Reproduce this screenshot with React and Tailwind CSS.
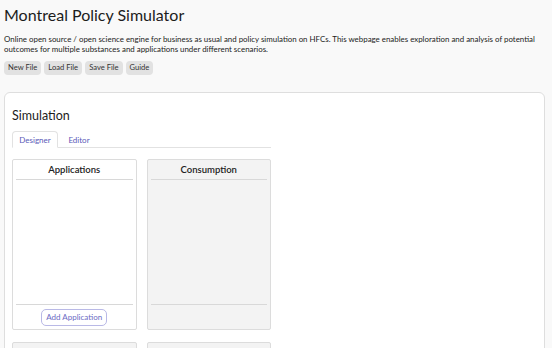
import React, { useState } from 'react';

const font = { fontFamily: 'Lato, "Liberation Sans", sans-serif' };

const ListPanel = ({ title, muted, action }) => (
    <div className={`h-[171px] flex flex-col border border-[#dcdcdc] rounded-[2px] px-[3px] ${muted ? 'bg-[#f3f3f3]' : 'bg-white'}`}>
        <div className="h-[20px] shrink-0 flex items-center justify-center border-b border-[#d8d8d8] text-[9.5px] font-semibold text-[#222]">
            {title}
        </div>
        <div className="flex-1 border-b border-[#d8d8d8]" />
        <div className="h-[24px] shrink-0 flex items-center justify-center">
            {action && (
                <button className="h-[17px] px-[4px] rounded-[5px] border border-[#b9b9e6] bg-white text-[8px] text-[#6b6bc4]">
                    {action}
                </button>
            )}
        </div>
    </div>
);

const App = () => {
    const [tab, setTab] = useState('designer');

    return (
        <div className="min-h-screen bg-[#f9f9f9] text-[#1c1c1c] px-[4px] pt-[5px]" style={font}>
            <h1 className="text-[16px] leading-[20px] font-normal">Montreal Policy Simulator</h1>
            <p className="mt-[10px] text-[7.9px] leading-[9.7px] text-[#222]">
                Online open source / open science engine for business as usual and policy simulation on HFCs. This webpage enables exploration and analysis of potential outcomes for multiple substances and applications under different scenarios.
            </p>
            <div className="mt-[6.5px] flex gap-[3px]">
                {['New File', 'Load File', 'Save File', 'Guide'].map(label => (
                    <button
                        key={label}
                        className="h-[14px] px-[4px] rounded-[4px] bg-[#e2e2e2] text-[7.6px] text-[#333] leading-none"
                    >
                        {label}
                    </button>
                ))}
            </div>

            <section className="mt-[17px] mr-[3px] bg-white border border-[#dedede] rounded-[6px] px-[7px] pt-[15px] pb-[20px]">
                <h2 className="text-[12.5px] leading-[16px]">Simulation</h2>
                <div className="w-[259px] mt-[7.5px] flex items-end border-b border-[#e2e2e2] text-[8px] text-[#5a5ab8]">
                    <button
                        onClick={() => setTab('designer')}
                        className={`h-[17px] w-[46px] rounded-t-[4px] -mb-px ${tab === 'designer' ? 'border border-b-white border-[#e2e2e2] bg-white' : ''}`}
                    >
                        Designer
                    </button>
                    <button
                        onClick={() => setTab('editor')}
                        className={`h-[17px] w-[42px] rounded-t-[4px] -mb-px ${tab === 'editor' ? 'border border-b-white border-[#e2e2e2] bg-white' : ''}`}
                    >
                        Editor
                    </button>
                </div>
                <div className="w-[259px] mt-[11px] grid grid-cols-2 gap-x-[10px] gap-y-[12px]">
                    <ListPanel title="Applications" action="Add Application" />
                    <ListPanel title="Consumption" muted />
                    <ListPanel muted />
                    <ListPanel muted />
                </div>
            </section>
        </div>
    );
};

export default App;
